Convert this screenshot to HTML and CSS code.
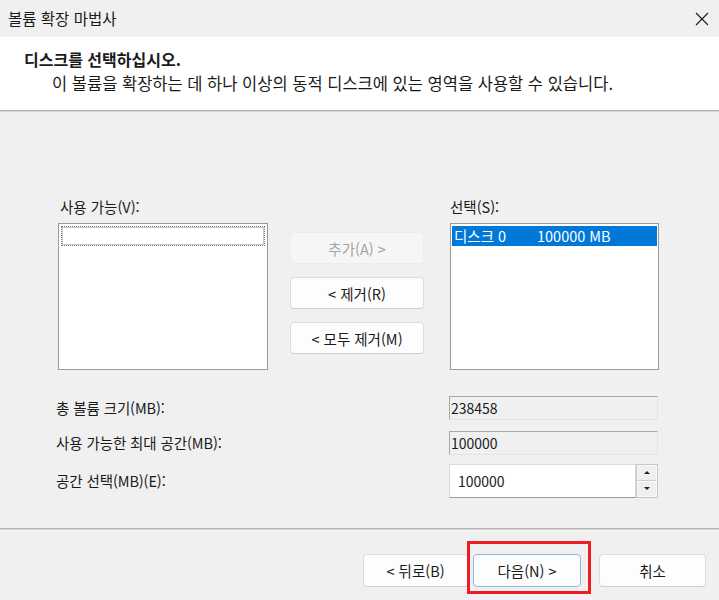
FILE: index.html
```html
<!DOCTYPE html>
<html lang="ko">
<head>
    <meta charset="UTF-8">
    <meta name="viewport" content="width=device-width, initial-scale=1">
    <title>볼륨 확장 마법사</title>
    <link rel="stylesheet" href="styles.css">
</head>
<body>
    <div class="titlebar">
        <span class="title">볼륨 확장 마법사</span>
        <svg class="close" width="14" height="14" viewBox="0 0 14 14">
            <path d="M1 1 L13 13 M13 1 L1 13" stroke="#1a1a1a" stroke-width="1.1" fill="none" />
        </svg>
    </div>

    <div class="header">
        <div class="heading">디스크를 선택하십시오.</div>
        <div class="sub">이 볼륨을 확장하는 데 하나 이상의 동적 디스크에 있는 영역을 사용할 수 있습니다.</div>
    </div>
    <div class="sep"></div>

    <div class="content">
        <div class="lists">
            <div class="col col-avail">
                <div class="label">사용 가능(V):</div>
                <div class="listbox">
                    <div class="focus-row"></div>
                </div>
            </div>

            <div class="col col-btns">
                <button class="btn" disabled>추가(A) &gt;</button>
                <button class="btn">&lt; 제거(R)</button>
                <button class="btn">&lt; 모두 제거(M)</button>
            </div>

            <div class="col col-sel">
                <div class="label">선택(S):</div>
                <div class="listbox">
                    <div class="row selected"><span class="disk">디스크 0</span><span>100000 MB</span></div>
                </div>
            </div>
        </div>

        <div class="fields">
            <div class="flabel">총 볼륨 크기(MB):</div>
            <div class="ro">238458</div>

            <div class="flabel">사용 가능한 최대 공간(MB):</div>
            <div class="ro">100000</div>

            <div class="flabel">공간 선택(MB)(E):</div>
            <div class="spin">
                <div class="spin-input">100000</div>
                <div class="spin-btns">
                    <div class="spin-up"><span class="tri-up"></span></div>
                    <div class="spin-down"><span class="tri-down"></span></div>
                </div>
            </div>
        </div>
    </div>
    <div class="sep"></div>

    <div class="footer">
        <button class="btn fbtn btn-back">&lt; 뒤로(B)</button>
        <span class="highlight">
            <button class="btn fbtn btn-next">다음(N) &gt;</button>
        </span>
        <button class="btn fbtn btn-cancel">취소</button>
    </div>
</body>
</html>
```

FILE: styles.css
```css
* { box-sizing: border-box;}

html {
    width: 100%;
    height: 100%;
}

body {
    margin: 0;
    padding: 0;
    width: 719px;
    height: 600px;
    overflow: hidden;
    background: #f0f0f0;
    color: #1a1a1a;
    font-family: "Noto Sans CJK KR", "Noto Sans", sans-serif;
    font-size: 14.5px;
}

.titlebar {
    height: 37px;
    display: flex;
    align-items: center;
    justify-content: space-between;
    padding: 0 10px 0 8px;
    background: #f0f0f0;
}

.title { font-size: 15.5px; line-height: 20px; margin-top: -1px;}

.header {
    height: 73px;
    background: #fff;
    padding: 10px 0 0 24px;
}

.heading {
    font-size: 16px;
    font-weight: bold;
    line-height: 24px;
}

.sub {
    font-size: 16.5px;
    line-height: 24px;
    padding-left: 28px;
}

.sep {
    height: 2px;
    border-top: 1px solid #b4b4b4;
    border-bottom: 1px solid #d6d6d6;
}

.content {
    height: 416px;
    padding: 86px 0 0 56px;
}

.lists {
    display: flex;
    align-items: flex-start;
}

.col { display: flex; flex-direction: column;}

.label {
    line-height: 18px;
    margin-bottom: 7px;
}

.col-avail { margin-left: 2px; width: 210px;}
.col-avail .label { padding-left: 2px;}

.col-btns {
    margin-left: 22px;
    width: 134px;
    padding-top: 34px;
    gap: 13px;
}

.col-sel { margin-left: 26px; width: 209px;}

.listbox {
    height: 147px;
    background: #fff;
    border: 1px solid #9a9a9a;
    padding: 2px 1px;
}

.focus-row {
    height: 20px;
    margin: 0 1px;
    border: 1px dotted #7a7a7a;
    outline: 1px solid #c8c8c8;
    outline-offset: -2px;
}

.row {
    height: 20px;
    line-height: 20px;
    padding-left: 2px;
    white-space: nowrap;
}

.row.selected {
    background: #0078d7;
    color: #fff;
}

.disk { display: inline-block; width: 83px;}

.btn {
    font-family: inherit;
    font-size: 14.5px;
    color: #1a1a1a;
    height: 32px;
    background: #fdfdfd;
    border: 1px solid #dcdcdc;
    border-bottom-color: #cfcfcf;
    border-radius: 4px;
    padding: 0;
}

.btn:disabled {
    background: #f6f6f6;
    border-color: #ededed;
    color: #a3a3a3;
}

.fields {
    margin-top: 26px;
    display: grid;
    grid-template-columns: 393px 209px;
    grid-template-rows: 24px 24px 34px;
    row-gap: 11px;
    align-items: center;
}

.fields .spin { margin-top: -5px;}

.flabel { line-height: 18px; letter-spacing: -0.1px;}
.fields .flabel:nth-last-child(2) { margin-top: -5px;}

.ro {
    height: 24px;
    line-height: 22px;
    background: #f0f0f0;
    border: 1px solid;
    border-color: #a8a8a8 #e4e4e4 #e4e4e4 #a8a8a8;
    padding-left: 1px;
    font-size: 14px;
}

.spin {
    display: flex;
    height: 34px;
}

.spin-input {
    flex: 1;
    background: #fff;
    border: 1px solid #dadada;
    border-bottom-color: #9a9a9a;
    line-height: 32px;
    padding-left: 8px;
    font-size: 14px;
}

.spin-btns {
    width: 22px;
    display: flex;
    flex-direction: column;
    border: 1px solid #c6c6c6;
}

.spin-up, .spin-down {
    flex: 1;
    display: flex;
    align-items: center;
    justify-content: center;
    background: #efefef;
    border: 1px solid #fafafa;
}

.spin-up { border-bottom-color: #cdcdcd;}

.tri-up, .tri-down {
    width: 0;
    height: 0;
    border-left: 3px solid transparent;
    border-right: 3px solid transparent;
}

.tri-up { border-bottom: 3px solid #202020;}
.tri-down { border-top: 3px solid #202020;}

.footer {
    display: flex;
    justify-content: flex-end;
    align-items: flex-start;
    padding: 24px 13px 0 0;
}

.fbtn { height: 33px;}
.btn-back { width: 105px;}
.btn-next {
    width: 108px;
    border-color: #8fb6e6;
}
.btn-cancel { width: 107px; margin-left: 18px;}

.highlight {
    position: relative;
    display: flex;
    margin-left: 5px;
}

.highlight::after {
    content: "";
    position: absolute;
    left: -6px;
    right: -10px;
    top: -13px;
    bottom: -7px;
    border: 3px solid #ee1c24;
    pointer-events: none;
}
```
